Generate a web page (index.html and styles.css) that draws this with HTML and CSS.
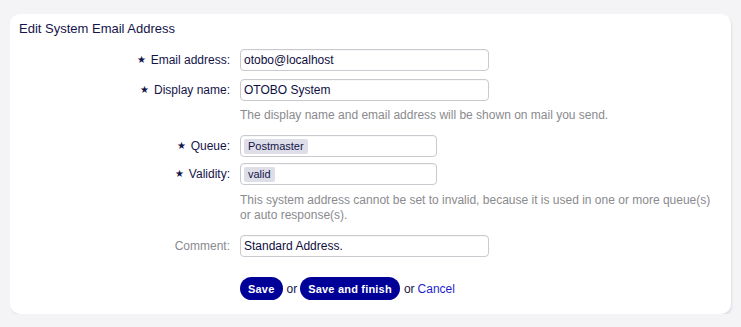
FILE: index.html
```html
<!DOCTYPE html>
<html lang="en">
<head>
<meta charset="utf-8">
<title>Edit System Email Address</title>
<link rel="stylesheet" href="styles.css">
</head>
<body>
<div class="card">
  <h2 class="title">Edit System Email Address</h2>
  <form class="form">
    <div class="row r-email">
      <label class="label"><span class="star">★</span>Email address:</label>
      <div class="input wide">otobo@localhost</div>
    </div>
    <div class="row r-display">
      <label class="label"><span class="star">★</span>Display name:</label>
      <div class="input wide">OTOBO System</div>
    </div>
    <div class="row r-help1">
      <span></span>
      <p class="help">The display name and email address will be shown on mail you send.</p>
    </div>
    <div class="row r-queue">
      <label class="label"><span class="star">★</span>Queue:</label>
      <div class="input select"><span class="chip">Postmaster</span></div>
    </div>
    <div class="row r-valid">
      <label class="label"><span class="star">★</span>Validity:</label>
      <div class="input select"><span class="chip">valid</span></div>
    </div>
    <div class="row r-help2">
      <span></span>
      <p class="help">This system address cannot be set to invalid, because it is used in one or more queue(s) or auto response(s).</p>
    </div>
    <div class="row r-comment">
      <label class="label optional">Comment:</label>
      <div class="input wide">Standard Address.</div>
    </div>
    <div class="row r-actions">
      <span></span>
      <div class="actions">
        <button type="button" class="btn">Save</button>
        <span class="or">or</span>
        <button type="button" class="btn">Save and finish</button>
        <span class="or">or</span>
        <a class="cancel" href="#">Cancel</a>
      </div>
    </div>
  </form>
</div>
</body>
</html>
```

FILE: styles.css
```css
html, body {
  margin: 0;
  padding: 0;
}
body {
  background: #f4f4f6;
  font-family: "Liberation Sans", Arial, Helvetica, sans-serif;
  color: #14144a;
  font-size: 12px;
  padding: 14px 10px 0 10px;
}
.card {
  box-sizing: border-box;
  width: 721px;
  height: 300px;
  background: #ffffff;
  border-radius: 10px;
  box-shadow: 1px 2px 2px rgba(40, 40, 80, 0.1);
  padding: 7px 9px 14px 9px;
}
.title {
  margin: 0;
  font-size: 13px;
  font-weight: normal;
  line-height: 16px;
  color: #14144a;
}
.form {
  margin-top: 12px;
  display: flex;
  flex-direction: column;
}
.row {
  display: grid;
  grid-template-columns: 211px 1fr;
  column-gap: 10px;
  align-items: center;
}
.r-display { margin-top: 8px; }
.r-help1 { margin-top: 7px; }
.r-queue { margin-top: 12px; }
.r-valid { margin-top: 6px; }
.r-help2 { margin-top: 8px; }
.r-comment { margin-top: 12px; }
.r-actions { margin-top: 20px; }

.label {
  text-align: right;
  line-height: 16px;
  color: #14144a;
}
.label.optional {
  color: #8a8a90;
}
.star {
  font-size: 9.5px;
  margin-right: 5px;
  position: relative;
  top: -1px;
}
.input {
  box-sizing: border-box;
  height: 22px;
  border: 1px solid #c9c9cf;
  border-radius: 4px;
  background: #fff;
  padding: 0 3px;
  line-height: 20px;
  font-size: 12px;
  color: #0e0e40;
  box-shadow: inset 0 1px 1px rgba(0, 0, 0, 0.03);
}
.input.wide { width: 249px; }
.input.select {
  width: 197px;
  display: flex;
  align-items: center;
}
.chip {
  background: #dedee8;
  border-radius: 2px;
  padding: 0 4px;
  font-size: 11px;
  line-height: 15px;
  color: #14144a;
}
.help {
  margin: 0;
  max-width: 478px;
  line-height: 15px;
  color: #8a8a8e;
  font-size: 12px;
}
.actions {
  display: flex;
  align-items: center;
}
.btn {
  height: 23px;
  border: none;
  border-radius: 12px;
  background: #000099;
  color: #ffffff;
  font-family: "Liberation Sans", Arial, Helvetica, sans-serif;
  font-weight: bold;
  font-size: 11px;
  letter-spacing: 0.2px;
  padding: 0 8px;
  cursor: pointer;
}
.or {
  margin: 0 3px 0 4px;
  color: #14144a;
}
.cancel {
  color: #1f1fcc;
  text-decoration: none;
}
```
